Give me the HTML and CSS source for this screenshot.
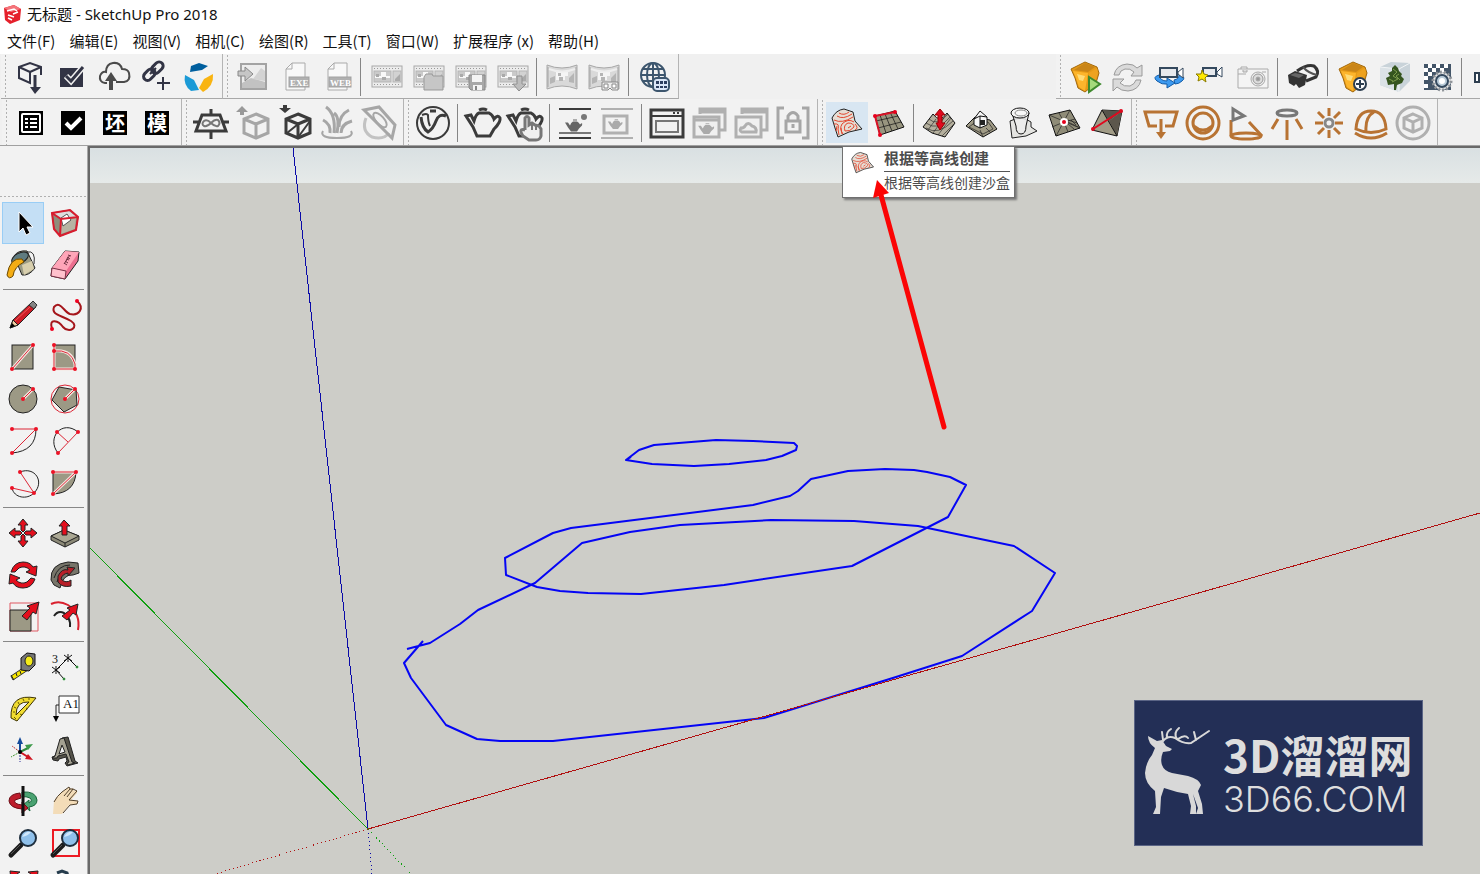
FILE: index.html
```html
<!DOCTYPE html>
<html lang="zh-CN">
<head>
<meta charset="utf-8">
<title>无标题 - SketchUp Pro 2018</title>
<link rel="stylesheet" href="styles.css">
</head>
<body>
<svg class="sprite" aria-hidden="true">
  <symbol id="film" viewBox="0 0 42 42">
    <rect x="7" y="10" width="30" height="21" fill="#ececec" stroke="#a8a8a8"/>
    <path d="M9 12.500H36M9 28.500H36" stroke="#999" stroke-dasharray="1 2"/>
    <rect x="9" y="15" width="17" height="11" fill="#cacaca" stroke="#b5b5b5"/>
    <rect x="28" y="15" width="8" height="11" fill="#d2d2d2" stroke="#b5b5b5"/>
    <path d="M10 20h6v-4h5v4h4v2h-15z" fill="#f8f8f8"/><path d="M11 18h3v3h-3zM17 21h4v3h-4zM30 23l5-5v7h-5z" fill="#aaa"/>
  </symbol>
  <symbol id="pano" viewBox="0 0 42 42">
    <path d="M6 9Q21 15 36 9V33Q21 27 6 33Z" fill="#d9d9d9" stroke="#a8a8a8"/>
    <path d="M7 11v20M35 11v20" stroke="#a5a5a5" stroke-width="1"/>
    <path d="M15 15h12v5h-3v4h-9z" fill="#f5f5f5"/><path d="M9 22l5-2v6l-5 2zM17 17h3v3h-3zM18 21h4v4h-4zM28 22l5-5v10l-5-1z" fill="#b5b5b5"/>
    <path d="M8 13Q21 18 34 13" fill="none" stroke="#eee" stroke-width="2"/>
  </symbol>
  <symbol id="teapot" viewBox="0 0 42 42">
    <path d="M4 14L9 13 12 19Q14 12 17 11H27Q31 13 32 17 36 12 38 16 39 20 32 27L28 34H15L11 25Z"/>
    <path d="M17 8Q21 6 25 8"/>
  </symbol>
  <symbol id="minipot" viewBox="0 0 20 14">
    <path d="M1 4L4 4 6 7Q7 4 9 3H13Q15 4 16 6 19 3 18 7L15 10 13 13H7L4 9ZM9 1h4v1H9z"/>
  </symbol>
  <symbol id="gem" viewBox="0 0 42 42">
    <path d="M21 6L33 11 35 17 32 27 21 36 14 32 11 22 7 13Z" fill="#e59a17" stroke="#a3690e" stroke-width="1"/>
    <path d="M21 7L31 11 24 16 10 14Z" fill="#c98518"/><path d="M9 15L24 17 21 35 15 31 12 22Z" fill="#fdb52c"/><path d="M13 18l8 2-2 5-4-1z" fill="#ffdc77"/><path d="M25 17l8-5 1 5-3 9-7 5z" fill="#eea21f"/>
  </symbol>
  <symbol id="lens" viewBox="0 0 42 42">
    <path d="M19 23L9 33" stroke="#1c1c1c" stroke-width="5" stroke-linecap="round"/><path d="M18 23L9 32" stroke="#555" stroke-width="1"/>
    <circle cx="26" cy="16" r="8" fill="#8fc0ea" stroke="#1e2e3d" stroke-width="2"/><path d="M20 15Q23 9 29 10 26 14 20 15" fill="#cfe7fb"/>
  </symbol>
</svg>

<header class="titlebar">
  <svg class="app-icon" width="19" height="20" viewBox="0 0 19 20"><path d="M1 4L11 1 18 5 17 16 7 20 2 16Z" fill="#e5202b"/><path d="M1 4L11 1 18 5 8 8Z" fill="#f4747a"/><path d="M4 7L11 5 14 7M5 11l6 2M10 10l5-2M5 14l4 2" stroke="#fff" stroke-width="1.500" fill="none"/></svg>
  <h1>无标题 - SketchUp Pro 2018</h1>
</header>
<nav class="menubar">
  <button>文件(F)</button><button>编辑(E)</button><button>视图(V)</button><button>相机(C)</button><button>绘图(R)</button><button>工具(T)</button><button>窗口(W)</button><button>扩展程序 (x)</button><button>帮助(H)</button>
</nav>

<div class="toolrow upper">
  <div class="group">
    <button class="tool" aria-label="下载模型"><svg viewBox="0 0 42 42" class="navy"><path d="M32 19V11L21 7 10 11V22L21 27V16L10 11M21 16L32 11"/><path d="M26 19V33" stroke-width="3"/><path d="M21 31H32L26 38Z" class="solid"/></svg></button>
    <button class="tool" aria-label="确认"><svg viewBox="0 0 42 42"><path d="M9 12H32V31H9Z" fill="#323445"/><path d="M15 20L20 25 32 11" fill="none" stroke="#f0f0f0" stroke-width="6"/><path d="M15 20L20 25 32 11" fill="none" stroke="#323445" stroke-width="3"/></svg></button>
    <button class="tool" aria-label="上传"><svg viewBox="0 0 42 42" class="navy"><path d="M14 27H12Q6 26 7 20 9 15 13 16 13 8 20 7 27 6 29 13 35 13 36 17 38 25 31 26H23" stroke="#4b4b4b"/><path d="M18 34V23" stroke="#4b4b4b" stroke-width="4"/><path d="M12 25L18 16 24 25Z" fill="#4b4b4b" stroke="none"/></svg></button>
    <button class="tool" aria-label="链接"><svg viewBox="0 0 42 42" class="navy"><g stroke-width="3"><rect x="16" y="8" width="13" height="8" rx="4" transform="rotate(-45 22 12)"/><rect x="8" y="15" width="13" height="8" rx="4" transform="rotate(-45 14 19)"/></g><path d="M15 18L21 12M22 27H35M28 21V34" stroke-width="2"/></svg></button>
    <button class="tool" aria-label="同步"><svg viewBox="0 0 42 42"><path d="M14 10L22 7 31 10 25 14 13 16Z" fill="#005f9e"/><path d="M8 19L17 24 22 34 14 35Q6 29 8 19Z" fill="#1b9ad6"/><path d="M36 18Q37 30 26 36L22 32 27 23Z" fill="#f9b411"/></svg></button>
  </div>
  <div class="group">
    <button class="tool" aria-label="导入"><svg viewBox="0 0 42 42"><rect x="10" y="8" width="25" height="25" fill="#ededed" stroke="#a3a3a3" stroke-width="2"/><path d="M11 27L20 22 34 26V32H11Z" fill="#c2c2c2"/><path d="M22 23L30 12 34 15V25Z" fill="#d3d3d3"/><path d="M7 15H14V11L22 18 14 25V20H7Z" fill="#c6c6c6" stroke="#888"/></svg></button>
    <button class="tool" aria-label="导出 EXE"><svg viewBox="0 0 42 42"><path d="M13 13L19 7H32V34H13Z" fill="#f8f8f8" stroke="#aaa"/><path d="M13 13H19V7" fill="none" stroke="#aaa"/><rect x="16" y="21" width="20" height="10" fill="#b0b0b0" stroke="#a1a1a1"/><text x="17" y="30" class="badge-text">EXE</text></svg></button>
    <button class="tool" aria-label="导出 WEB"><svg viewBox="0 0 42 42"><path d="M13 13L19 7H32V34H13Z" fill="#f8f8f8" stroke="#aaa"/><path d="M13 13H19V7" fill="none" stroke="#aaa"/><rect x="14" y="21" width="22" height="10" fill="#b0b0b0" stroke="#a1a1a1"/><text x="15" y="30" class="badge-text">WEB</text></svg></button>
    <span class="sep"></span>
    <button class="tool" aria-label="视频"><svg><use href="#film"/></svg></button>
    <button class="tool" aria-label="打开视频"><svg viewBox="0 0 42 42"><use href="#film"/><path d="M17 21L19 18H25L26 20H36V34H17Z" fill="#c6c6c6" stroke="#999"/></svg></button>
    <button class="tool" aria-label="保存视频"><svg viewBox="0 0 42 42"><use href="#film"/><path d="M20 19H36V34H22L20 32Z" fill="#a8a8a8" stroke="#888"/><path d="M23 19h10v7H23zM24 29h9v5h-9z" fill="#f4f4f4"/><path d="M26 30h2v4h-2z" fill="#888"/></svg></button>
    <button class="tool" aria-label="导出视频"><svg viewBox="0 0 42 42"><use href="#film"/><path d="M26 20H31V28H35L28 35 22 28H26Z" fill="#bdbdbd" stroke="#8e8e8e"/></svg></button>
    <span class="sep"></span>
    <button class="tool" aria-label="全景"><svg><use href="#pano"/></svg></button>
    <button class="tool" aria-label="VR 全景"><svg viewBox="0 0 42 42"><use href="#pano"/><path d="M19 26H35V34H29L27 32 25 34H19Z" fill="#eee" stroke="#888"/><path d="M21 28h4v4h-4zM29 28h4v4h-4z" fill="#fff" stroke="#888"/></svg></button>
    <span class="sep"></span>
    <button class="tool" aria-label="在线全景"><svg viewBox="0 0 42 42" fill="none" stroke="#3d566e" stroke-width="2"><circle cx="20" cy="19" r="12"/><ellipse cx="20" cy="19" rx="6" ry="12"/><path d="M20 7V31M8 19H32M10 13H30M10 25H30"/><rect x="20" y="22" width="16" height="13" rx="4" fill="#dbe7f8"/><path d="M23 25h3v3h-3zM27 25h3v3h-3zM31 25h3v3h-3zM23 30h3v2h-3zM27 30h3v2h-3zM31 30h3v2h-3z" fill="#2c3e60" stroke="none"/></svg></button>
  </div>
  <div class="group last">
    <button class="tool" aria-label="启动"><svg viewBox="0 0 42 42"><use href="#gem"/><path d="M25 21L36 28 25 36Z" fill="#a5da7c" stroke="#3f8a2e" stroke-width="2"/></svg></button>
    <button class="tool" aria-label="刷新"><svg viewBox="0 0 42 42" fill="#dadada" stroke="#9a9a9a"><path d="M8 19Q10 9 21 8 28 8 31 12L36 9V20H25L28 16Q24 12 19 13 14 14 13 19Z"/><path d="M35 24Q33 34 22 35 15 35 11 31L7 35V23H18L14 27Q18 31 24 30 29 28 30 24Z"/></svg></button>
    <button class="tool" aria-label="同步视图"><svg viewBox="0 0 42 42"><path d="M11 19Q4 21 9 25 14 29 19 28V32L27 27 19 22V25Q12 25 11 19M31 19Q39 21 34 25 31 28 27 28L26 24Q31 23 31 19Z" fill="#3d9af0" stroke="#125ca8"/><rect x="12" y="12" width="17" height="9" fill="#e6e9ed" stroke="#34495e" stroke-width="2"/><path d="M30 16L35 12V22L30 18Z" fill="#fff" stroke="#34495e"/></svg></button>
    <button class="tool" aria-label="收藏视图"><svg viewBox="0 0 42 42"><rect x="13" y="12" width="13" height="8" fill="#e6e9ed" stroke="#34495e" stroke-width="2"/><path d="M27 16L32 11V21L27 18Z" fill="#fff" stroke="#34495e"/><path d="M12 14L14 18 18 19 15 22 16 26 12 23 8 25 9 21 6 18 11 18Z" fill="#ffe900" stroke="#8a7b00"/></svg></button>
    <button class="tool" aria-label="截图"><svg viewBox="0 0 42 42" stroke="#aaa"><path d="M9 13V11H15V13M6 13H36V32H6Z" fill="#f4f4f4"/><path d="M6 18h8M30 16h4" /><path d="M11 14v2h4v-2" fill="#ddd"/><circle cx="26" cy="23" r="7" fill="#eee"/><circle cx="26" cy="23" r="5" fill="#ddd" stroke="#999"/><circle cx="26" cy="23" r="2" fill="#999"/></svg></button>
    <span class="sep"></span>
    <button class="tool" aria-label="VR"><svg viewBox="0 0 42 42"><path d="M15 15Q25 8 32 10 38 15 34 21L24 25" fill="none" stroke="#333" stroke-width="3"/><path d="M21 11Q26 17 35 19" fill="none" stroke="#555" stroke-width="2"/><path d="M6 19L13 15 25 19 23 29 17 32 14 28 12 30 7 27Z" fill="#333"/><path d="M8 19L13 17 22 19 17 22Z" fill="#666"/></svg></button>
    <span class="sep"></span>
    <button class="tool" aria-label="添加素材"><svg viewBox="0 0 42 42"><use href="#gem"/><circle cx="28" cy="28" r="6" fill="#fff" stroke="#2d3e50" stroke-width="2"/><path d="M24 28H32M28 24V32" stroke="#2d3e50" stroke-width="2"/></svg></button>
    <button class="tool" aria-label="植物"><svg viewBox="0 0 42 42"><path d="M6 11L17 6 36 7V25L25 36 6 29Z" fill="#c9d3d9"/><path d="M6 11L25 13V36L6 29Z" fill="#dbe2e6"/><path d="M6 11L25 13 36 7M25 13V36" stroke="#f2f5f6" fill="none"/><path d="M21 9L24 12 25 15 28 18 27 20 30 23 28 27 23 29 22 34H20V28L14 29 13 25 12 22 16 20 14 17 18 15 18 12Z" fill="#35551f"/><path d="M19 13l4 3-4 4 5 3-6 3M25 18l-3 2 4 4M15 23l4 2" stroke="#7d9c4c" fill="none"/></svg></button>
    <button class="tool" aria-label="材质设置"><svg viewBox="0 0 42 42"><rect x="8" y="8" width="27" height="26" fill="#435568"/><path d="M12 8h4v4h-4zM20 8h4v4h-4zM28 8h4v4h-4zM8 12h4v4H8zM16 12h4v4h-4zM24 12h4v4h-4zM12 16h4v4h-4zM8 20h4v4H8zM8 28h4v4H8z" fill="#fff"/><circle cx="26" cy="25" r="9" fill="#e6e6e6" stroke="#8f9499" stroke-width="3" stroke-dasharray="2 2"/><circle cx="26" cy="25" r="6" fill="#b9cbd8" stroke="#34495e" stroke-width="2"/><circle cx="26" cy="25" r="3" fill="#fff"/></svg></button>
    <span class="sep"></span>
    <button class="tool clipped" aria-label="更多"><svg viewBox="0 0 42 42"><path d="M9 17H20V26H9ZM13 17V26" fill="#fff" stroke="#2d3e50" stroke-width="2"/></svg></button>
  </div>
</div>

<div class="toolrow lower">
  <div class="group">
    <button class="tool" aria-label="列表"><svg viewBox="0 0 42 42"><path d="M9 9H33V33H9Z"/><rect x="12" y="12" width="18" height="18" rx="1" fill="none" stroke="#fff" stroke-width="2"/><path d="M15 17h3M15 21h3M15 25h3M20 17h7M20 21h7M20 25h7" stroke="#fff" stroke-width="2"/></svg></button>
    <button class="tool" aria-label="勾选"><svg viewBox="0 0 42 42"><path d="M9 9H33V33H9Z"/><path d="M14 21L19 26 29 16" fill="none" stroke="#fff" stroke-width="4"/></svg></button>
    <button class="tool"><span class="stamp">坯</span></button>
    <button class="tool"><span class="stamp">模</span></button>
  </div>
  <div class="group">
    <button class="tool" aria-label="无限平面"><svg viewBox="0 0 42 42" class="dark"><path d="M12 13H30L36 29H6ZM21 7V13M21 30V37M3 20H9M33 20H39"/><path d="M21 21Q17 17 14 19 11 22 14 24 17 25 21 21 25 17 28 18 31 21 28 24 25 25 21 21" stroke="#777" stroke-width="2"/></svg></button>
    <button class="tool" aria-label="导出代理"><svg viewBox="0 0 42 42" class="pale"><path d="M24 12L36 17V31L24 36 12 31V17ZM12 17L24 22 36 17M24 22V36"/><path d="M10 4L16 10H12V13H8V10H4Z" fill="#999" stroke="none"/></svg></button>
    <button class="tool" aria-label="导入代理"><svg viewBox="0 0 42 42" class="dark"><path d="M24 12L36 17V31L24 36 12 31V17ZM12 17L24 22 36 17M24 22V36"/><path d="M13 31L23 23M25 34L36 19" stroke-width="2"/><path d="M11 11L5 6H9V3H13V6H17Z" class="solid"/></svg></button>
    <button class="tool" aria-label="毛发"><svg viewBox="0 0 42 42" class="pale"><path d="M7 29Q3 36 21 36 39 36 35 29" stroke-width="2"/><path d="M14 31Q15 22 7 18M18 31Q20 12 10 5M21 31Q24 15 18 11M25 31Q25 22 36 19M23 25Q23 13 33 8"/></svg></button>
    <button class="tool" aria-label="剖切"><svg viewBox="0 0 42 42" class="pale"><path d="M8 16Q3 29 14 35 26 38 31 31" stroke="#c2c2c2"/><path d="M6 8L21 5 37 23 34 36Z"/><ellipse cx="22" cy="18" rx="4" ry="9" transform="rotate(-42 22 18)" stroke-width="2"/></svg></button>
  </div>
  <div class="group">
    <button class="tool" aria-label="V-Ray"><svg viewBox="0 0 42 42" class="dark"><circle cx="21" cy="21" r="16" stroke-width="2"/><path d="M9 15Q10 26 16 30 21 27 24 19 27 11 34 14"/><path d="M10 13Q15 11 16 13 16 20 18 24" stroke-width="2"/><path d="M18 9H24" /></svg></button>
    <span class="sep"></span>
    <button class="tool" aria-label="渲染"><svg viewBox="0 0 42 42" class="dark"><use href="#teapot"/></svg></button>
    <button class="tool" aria-label="交互渲染"><svg viewBox="0 0 42 42" class="dark"><use href="#teapot"/><path d="M21 28V16Q23 13 25 16V23L28 21 31 23 35 24 37 27V34Q36 38 32 38H25L19 34Q14 26 21 28" fill="#f0f0f0" stroke="#777" stroke-width="3"/><path d="M28 23v5M32 24v4" stroke="#777" stroke-width="2"/></svg></button>
    <span class="sep"></span>
    <button class="tool" aria-label="视口渲染"><svg viewBox="0 0 42 42"><path d="M5 7H37M5 36H37" stroke="#3b3b3b" stroke-width="2"/><path d="M5 31H37" stroke="#777" stroke-width="2"/><use href="#minipot" x="10" y="16" width="20" height="15" fill="#666"/><circle cx="30" cy="15" r="3" fill="#777"/></svg></button>
    <button class="tool" aria-label="视口渲染 2"><svg viewBox="0 0 42 42"><path d="M5 7H37M5 36H37" stroke="#b0b0b0" stroke-width="2"/><rect x="8" y="14" width="23" height="17" fill="none" stroke="#b0b0b0" stroke-width="3"/><use href="#minipot" x="11" y="16" width="17" height="12" fill="#aaa"/></svg></button>
    <span class="sep"></span>
    <button class="tool" aria-label="帧缓存"><svg viewBox="0 0 42 42" class="dark"><rect x="5" y="8" width="32" height="27"/><path d="M5 14H37" stroke-width="2"/><path d="M27 11h2M31 11h2" stroke-width="2"/><rect x="10" y="19" width="22" height="11" stroke="#777" stroke-width="2"/></svg></button>
    <button class="tool" aria-label="批量渲染"><svg viewBox="0 0 42 42" class="pale slim"><path d="M12 12V7H37V28H32M12 10H37"/><rect x="6" y="15" width="25" height="20" fill="#f0f0f0"/><path d="M6 18H31"/><use href="#minipot" x="9" y="20" width="19" height="13" class="palefill"/></svg></button>
    <button class="tool" aria-label="云渲染"><svg viewBox="0 0 42 42" class="pale slim"><path d="M12 12V7H37V28H32M12 10H37"/><rect x="6" y="15" width="25" height="20" fill="#f0f0f0"/><path d="M12 30Q9 29 11 26 14 26 15 24 18 19 22 24 27 25 26 30Z"/></svg></button>
    <button class="tool" aria-label="锁定"><svg viewBox="0 0 42 42" class="pale"><path d="M12 6H6V36H12M30 6H36V36H30M16 18V14Q21 7 26 14V18"/><rect x="14" y="19" width="14" height="11"/><path d="M21 22v4"/></svg></button>
  </div>
  <div class="group">
    <button class="tool hover" aria-label="根据等高线创建"><svg viewBox="0 0 42 42"><g id="contour"><path d="M6 16Q10 8 18 7L27 10 29 19 36 27 23 30 12 35 9 26Z" fill="#e6ddd4" stroke="#222"/><path d="M11 14Q17 18 26 12M13 11Q18 14 23 10M8 18Q16 22 27 15M8 22Q14 21 12 27L13 33M11 24l-1 5M17 32Q13 27 16 22 22 16 28 20M19 29Q17 23 22 21 28 21 28 25 24 30 19 29M22 26l3-2M29 22Q33 26 29 28M15 26l1 6" fill="none" stroke="#e3452d"/></g></svg></button>
    <button class="tool" aria-label="根据网格创建"><svg viewBox="0 0 42 42"><path d="M7 14L27 9 36 25 12 33Z" fill="#98957f" stroke="#111"/><path d="M12 13L18 31M17 12L24 29M22 10L30 27M8 19L30 14M10 26L33 20" stroke="#111" stroke-opacity=".7"/><path d="M27 10L7 14 12 33" fill="none" stroke="#d81226" stroke-width="2"/><g fill="#e8001c"><circle cx="7" cy="14" r="2"/><circle cx="27" cy="10" r="2"/><circle cx="12" cy="33" r="2"/></g></svg></button>
    <span class="sep"></span>
    <button class="tool" aria-label="曲面起伏"><svg viewBox="0 0 42 42"><path d="M5 25L15 12Q22 22 29 11L37 21 27 35 14 31Z" fill="#b4af9d" stroke="#111"/><path d="M8 21Q20 30 32 15M11 17Q19 25 30 12M10 28L18 17M15 31L26 16M20 33L33 16M24 34L36 22M8 26Q20 34 35 19" fill="none" stroke="#222" stroke-opacity=".6"/><path d="M22 7L27 13H24V21H27L22 28 18 21H20V13H17Z" fill="#e0091e" stroke="#900"/></svg></button>
    <button class="tool" aria-label="曲面平整"><svg viewBox="0 0 42 42"><path d="M6 24L15 15 30 18 37 27 23 35Z" fill="#a09b86" stroke="#111"/><path d="M9 25L17 19 28 20 33 27 23 32ZM23 35L20 28M31 31l-5-5" fill="none" stroke="#222" stroke-opacity=".7"/><path d="M14 17L20 9 27 15V23L20 26 14 23Z" fill="#f8f8f8" stroke="#111"/><path d="M14 17L20 14 27 15M20 14V26" stroke="#111" fill="none"/><path d="M20 18h5v5h-5z" fill="#222"/></svg></button>
    <button class="tool" aria-label="曲面投射"><svg viewBox="0 0 42 42"><path d="M8 19Q20 13 29 20L29 25 35 29 24 34 10 36Z" fill="#e4e4e1" stroke="#222"/><path d="M10 11L14 24Q14 32 19 32 24 32 24 24L27 11" fill="#eee" fill-opacity=".8" stroke="#111"/><ellipse cx="18" cy="11" rx="9" ry="5" fill="#f7f7f7" stroke="#111"/><ellipse cx="19" cy="11" rx="6" ry="3" fill="none" stroke="#888"/></svg></button>
    <button class="tool" aria-label="添加细部"><svg viewBox="0 0 42 42"><path d="M5 13L26 8 36 26 12 34Z" fill="#8f8c78" stroke="#111"/><path d="M5 13L36 26M26 8L12 34M20 20L15 11M20 20L8 25M20 20L24 30M20 20L31 17M24 20l10 5M24 22l6 5M27 18l5 5M24 18l9 3" stroke="#222" stroke-opacity=".7"/><circle cx="20" cy="20" r="4" fill="#fff"/><circle cx="20" cy="20" r="2" fill="#e4001b"/></svg></button>
    <button class="tool" aria-label="对调角线"><svg viewBox="0 0 42 42"><path d="M16 8L36 9 31 34 6 28Z" fill="#a19c87" stroke="#111"/><path d="M16 8L36 9 23 19Z" fill="#57534a"/><path d="M36 9L31 34 23 19Z" fill="#5c574c"/><path d="M16 8L31 34" stroke="#111"/><path d="M7 27L35 9" stroke="#e0091e" stroke-width="2"/><circle cx="7" cy="27" r="2" fill="#e0091e"/><circle cx="35" cy="9" r="2" fill="#e0091e"/></svg></button>
  </div>
  <div class="group">
    <button class="tool" aria-label="面光源"><svg viewBox="0 0 42 42" class="amber"><path d="M17 24H9L5 10H37L33 24H25M21 17V32"/><path d="M16 30H26L21 37Z" fill="#b87333" stroke="none"/></svg></button>
    <button class="tool" aria-label="球光源"><svg viewBox="0 0 42 42" class="amber"><circle cx="21" cy="21" r="16"/><circle cx="21" cy="21" r="10"/><path d="M12 24Q21 32 30 24"/></svg></button>
    <button class="tool" aria-label="聚光灯"><svg viewBox="0 0 42 42" class="amber"><path d="M7 18V34M25 20L38 34"/><ellipse cx="22" cy="34" rx="15" ry="3"/><path d="M9 7L20 14 9 18Z" stroke="#777"/></svg></button>
    <button class="tool" aria-label="IES 光源"><svg viewBox="0 0 42 42" class="amber"><path d="M21 18V38M12 17L6 27M30 17L36 27"/><ellipse cx="21" cy="11" rx="10" ry="3" stroke="#777"/></svg></button>
    <button class="tool" aria-label="泛光灯"><svg viewBox="0 0 42 42" class="amber"><path d="M21 6V14M21 28V36M7 21H15M27 21H35M10 10L16 16M26 26L32 32M32 10L26 16M16 26L10 32"/><circle cx="21" cy="21" r="4" stroke="#888"/></svg></button>
    <button class="tool" aria-label="穹顶光源"><svg viewBox="0 0 42 42" class="amber"><path d="M6 27Q7 9 21 9 35 9 36 27 21 34 6 27ZM16 29Q15 15 24 10M5 31Q21 41 37 31"/></svg></button>
    <button class="tool" aria-label="网格光源"><svg viewBox="0 0 42 42" class="pale slim"><circle cx="21" cy="21" r="16"/><path d="M21 12L30 16V26L21 30 12 26V16ZM12 16L21 20 30 16M21 20V30" stroke-width="3"/></svg></button>
  </div>
</div>

<main class="workspace">
  <aside class="palette">
    <div class="pair">
      <button class="tool picked" aria-label="选择"><svg viewBox="0 0 42 42"><path d="M17 10V30L21 26 24 33 28 31 25 25H31Z" stroke="#fff"/></svg></button>
      <button class="tool" aria-label="制作组件"><svg viewBox="0 0 42 42"><path d="M8 11L26 8 34 15 32 28 16 34 10 27Z" fill="#8f8d7c" stroke="#333"/><path d="M9 11L25 9 33 15 16 17Z" fill="#ddd"/><path d="M17 18L32 16 31 27 17 32Z" fill="#b7b4a3"/><path d="M17 16l6-4 4 6-8 6z" fill="#fff" stroke="#555"/><path d="M8 11L26 8 34 15 32 28 16 34 10 27ZM8 11L17 17 34 15M17 17L16 34" fill="none" stroke="#d81c2e" stroke-width="2"/></svg></button>
      <button class="tool" aria-label="材质"><svg viewBox="0 0 42 42"><path d="M12 12Q16 6 25 7L33 24Q27 32 20 31Z" fill="#9a9a84" stroke="#222"/><ellipse cx="18" cy="14" rx="9" ry="5" transform="rotate(-28 18 14)" fill="#5f7b80" stroke="#222"/><path d="M20 21l10-4 2 8-10 6z" fill="#d8cfae"/><path d="M20 15Q8 13 5 31 7 36 11 32 12 23 22 18Z" fill="#f5ad13" stroke="#6b4800"/><path d="M25 8Q34 6 32 20" fill="none" stroke="#333"/></svg></button>
      <button class="tool" aria-label="橡皮擦"><svg viewBox="0 0 42 42"><path d="M8 24L21 7 35 8 34 17 21 35 7 32Z" fill="#ec6f90" stroke="#222"/><path d="M8 24L21 7 35 8 22 27Z" fill="#ffa5b8"/><path d="M8 24L22 27 21 35 7 32Z" fill="#ffc1cd" stroke="#7b3146"/><path d="M20 19l3 2M21 17l3 2M22 15l3 1M23 13l3 2M24 11l3 1M20 20l6-9" stroke="#6d3040"/></svg></button>
    </div>
    <hr>
    <div class="pair">
      <button class="tool" aria-label="直线"><svg viewBox="0 0 42 42"><path d="M8 34L11 26 29 9 34 13 16 31Z" fill="#cf1c26" stroke="#222"/><path d="M8 34L11 26 16 31Z" fill="#f1d2a5" stroke="#222"/><path d="M8 34l2-5 3 3z"/><path d="M27 11L31 7 35 11 32 15Z" fill="#858585" stroke="#333"/><path d="M13 27L28 13" stroke="#f05a5a"/></svg></button>
      <button class="tool" aria-label="手绘线"><svg viewBox="0 0 42 42"><path d="M8 35C4 23 15 27 19 33 25 40 36 33 27 27 17 21 7 21 10 13 16 6 20 18 26 20 35 22 41 14 33 7" fill="none" stroke="#a5161c" stroke-width="2"/><circle cx="8" cy="35" r="2" fill="#f00020"/><circle cx="33" cy="7" r="2" fill="#f00020"/></svg></button>
      <button class="tool" aria-label="矩形"><svg viewBox="0 0 42 42" class="draw"><rect x="10" y="9" width="21" height="24" class="face"/><path d="M10 33L31 9" class="halo"/><path d="M10 33L31 9" class="red"/><circle cx="10" cy="33" r="2"/><circle cx="31" cy="9" r="2"/></svg></button>
      <button class="tool" aria-label="旋转矩形"><svg viewBox="0 0 42 42" class="draw"><rect x="10" y="9" width="21" height="24" class="face"/><path d="M10 9V33H31V28Q27 13 10 15" class="halo"/><path d="M10 9V33H31V28Q27 13 10 15" class="red"/><circle cx="10" cy="9" r="2"/><circle cx="10" cy="15" r="2"/><circle cx="10" cy="33" r="2"/><circle cx="31" cy="33" r="2"/></svg></button>
      <button class="tool" aria-label="圆"><svg viewBox="0 0 42 42" class="draw"><circle cx="21" cy="21" r="14" class="face"/><path d="M21 21L31 11" class="halo"/><path d="M21 21L31 11" class="red"/><circle cx="21" cy="21" r="2"/><circle cx="31" cy="11" r="2"/></svg></button>
      <button class="tool" aria-label="多边形"><svg viewBox="0 0 42 42" class="draw"><circle cx="21" cy="21" r="14" class="red"/><path d="M15 9L32 12 33 27 20 34 8 22Z" class="face"/><path d="M21 21L31 11" class="halo"/><path d="M21 21L31 11" class="red"/><circle cx="21" cy="21" r="2"/><circle cx="31" cy="11" r="2"/></svg></button>
      <button class="tool" aria-label="圆弧"><svg viewBox="0 0 42 42" class="draw"><path d="M34 9Q34 31 10 33" class="ink"/><path d="M10 9H34L10 33" class="red"/><circle cx="10" cy="9" r="2"/><circle cx="34" cy="9" r="2"/><circle cx="10" cy="33" r="2"/></svg></button>
      <button class="tool" aria-label="两点圆弧"><svg viewBox="0 0 42 42" class="draw"><path d="M14 33C2 18 18 -1 34 12" class="ink"/><path d="M14 33L34 12M13 12L24 22" class="red"/><circle cx="13" cy="12" r="2"/><circle cx="34" cy="12" r="2"/><circle cx="14" cy="33" r="2"/></svg></button>
      <button class="tool" aria-label="三点圆弧"><svg viewBox="0 0 42 42" class="draw"><path d="M18 10C33 4 43 20 32 31 25 38 12 36 10 26" class="ink"/><path d="M18 10L32 31 10 26" class="red"/><circle cx="18" cy="10" r="2"/><circle cx="32" cy="31" r="2"/><circle cx="10" cy="26" r="2"/></svg></button>
      <button class="tool" aria-label="扇形"><svg viewBox="0 0 42 42" class="draw"><path d="M9 10H32Q31 31 9 32Z" class="face"/><path d="M9 10H32L9 32" class="halo"/><path d="M9 10H32L9 32" class="red"/><circle cx="9" cy="10" r="2"/><circle cx="32" cy="10" r="2"/><circle cx="9" cy="32" r="2"/></svg></button>
    </div>
    <hr>
    <div class="pair">
      <button class="tool" aria-label="移动"><svg viewBox="0 0 42 42" class="bold"><path d="M21 7L26 13H23V18L21 20 19 18V13H16ZM35 21L29 26V23H24L22 21 24 19H29V16ZM21 35L16 29H19V24L21 22 23 24V29H26ZM7 21L13 16V19H18L20 21 18 23H13V26Z"/></svg></button>
      <button class="tool" aria-label="推拉"><svg viewBox="0 0 42 42" class="bold"><path d="M7 24L20 18 35 24V28L21 35 7 28Z" fill="#8b8977"/><path d="M7 24L20 18 35 24 21 31Z" fill="#aaa793"/><path d="M21 31V35"/><path d="M18 23V14H15L20 8 26 14H23V23Z"/></svg></button>
      <button class="tool" aria-label="旋转"><svg viewBox="0 0 42 42" class="bold"><path d="M9 18Q12 8 21 8 28 8 31 13L35 12 34 22 24 18 28 16Q23 11 17 14L13 18Z"/><path d="M33 25Q30 34 21 34 14 34 11 29L7 30 8 20 18 24 14 26Q19 31 25 28L29 24Z"/></svg></button>
      <button class="tool" aria-label="路径跟随"><svg viewBox="0 0 42 42" class="bold"><path d="M7 26Q6 10 24 8L34 9 35 19 29 21Q19 20 16 34L10 31Z" fill="#77756a"/><path d="M10 24Q14 11 26 11M13 28Q15 17 30 15" fill="none"/><path d="M14 22Q18 14 24 16L23 13 31 14 24 22V19Q18 20 17 25 22 30 27 26V32Q18 34 14 28Z" fill="#b81f28"/></svg></button>
      <button class="tool" aria-label="缩放"><svg viewBox="0 0 42 42" class="bold"><path d="M8 7H36V35H8Z" fill="none" stroke="#df5962"/><path d="M8 14H29V35H8Z" fill="#9c9985"/><path d="M25 24L31 16 34 18 37 6 25 10 28 12 20 20Z"/></svg></button>
      <button class="tool" aria-label="偏移"><svg viewBox="0 0 42 42" class="bold"><path d="M7 8Q15 4 24 9 37 18 34 34" fill="none" stroke="#d9202e" stroke-width="2"/><path d="M10 20Q14 14 20 17 27 22 26 31" fill="none" stroke-width="2"/><path d="M23 24L29 17 32 19 34 8 23 12 26 14 18 20Z"/></svg></button>
    </div>
    <hr>
    <div class="pair">
      <button class="tool" aria-label="卷尺"><svg viewBox="0 0 42 42"><path d="M9 30L24 20 26 24 11 34Z" fill="#f7e600" stroke="#333"/><path d="M9 29l3 5M14 27l1 3M18 25l1 3" stroke="#222"/><path d="M19 12L25 7 33 8 33 19 27 25 19 24Z" fill="#777" stroke="#111"/><ellipse cx="27" cy="15" rx="4" ry="5" fill="#f4ea19" stroke="#222"/></svg></button>
      <button class="tool" aria-label="尺寸"><svg viewBox="0 0 42 42" stroke="#111"><path d="M12 24L24 12M24 12L33 21M12 24L20 33M20 9l8 6M28 9l-8 6M8 21l8 6M16 21l-8 6M24 8v8M12 20v8" fill="none"/><text x="8" y="17" class="dim">3</text><circle cx="33" cy="21" r="1" stroke="#38a545"/><circle cx="20" cy="33" r="1" stroke="#38a545"/></svg></button>
      <button class="tool" aria-label="量角器"><svg viewBox="0 0 42 42"><path d="M34 10Q8 5 9 30L15 33Z" fill="#f1dd31" stroke="#3c3200"/><path d="M27 14Q14 13 14 27Z" fill="#f0f0f0" stroke="#3c3200"/><path d="M12 29l2 2M11 24h2M12 19l2 1M16 14l1 2M21 11l1 2M27 10v2M18 26l2 1M24 20l2 1" stroke="#6b5c00"/></svg></button>
      <button class="tool" aria-label="文字"><svg viewBox="0 0 42 42"><path d="M15 8H35V25H15Z" fill="#fff" stroke="#333"/><path d="M15 17H12V29" fill="none" stroke="#222"/><path d="M9 28H15L12 34Z"/><text x="19" y="20" class="a1">A1</text></svg></button>
      <button class="tool" aria-label="轴"><svg viewBox="0 0 42 42"><g stroke-dasharray="2 1"><path d="M18 22L10 16" stroke="#b33"/><path d="M18 22L9 27" stroke="#493"/><path d="M18 22V32" stroke="#339"/></g><path d="M18 22V13" stroke="#154b9b" stroke-width="2"/><path d="M15 14L18 7 21 14Z" fill="#154b9b"/><path d="M18 22L26 18" stroke="#2f8a3c" stroke-width="2"/><path d="M23 15L31 14 26 20Z" fill="#3c9a4a"/><path d="M18 22L26 27" stroke="#cf1521" stroke-width="2"/><path d="M26 24L31 30 23 29Z" fill="#cf1521"/><circle cx="18" cy="22" r="2"/></svg></button>
      <button class="tool" aria-label="三维文字"><svg viewBox="0 0 42 42"><path d="M18 8L24 7 31 31 34 33 23 36 21 33 23 31 22 27 15 29 14 31 9 30 8 27 11 26Z" fill="#55534a" stroke="#222"/><path d="M16 9L20 8 28 32 31 33 24 35 23 33 25 32 22 24 14 26 13 28 8 28 11 26Z" fill="#a4a192" stroke="#222"/><path d="M18 15L21 22 15 24Z" fill="#f1f1f1" stroke="#222"/></svg></button>
    </div>
    <hr>
    <div class="pair">
      <button class="tool" aria-label="环绕观察"><svg viewBox="0 0 42 42"><path d="M20 12Q34 11 35 20 35 26 27 27L28 31 21 25 27 20V23Q31 21 28 18 24 16 20 17Z" fill="#4aa271" stroke="#17643a"/><path d="M18 13Q7 14 7 21 8 28 20 29V33L26 28 20 22V25Q11 24 13 20L19 18Z" fill="#bd1d2c" stroke="#6d0d16"/><path d="M21 6V36" stroke="#111" stroke-width="3"/></svg></button>
      <button class="tool" aria-label="平移"><svg viewBox="0 0 42 42"><path d="M9 34L10 21Q13 16 18 12L25 7 27 9 29 8 30 11 33 10 33 13 27 20 34 21 33 24 25 25 20 31 18 34Z" fill="#f3dcb8"/><path d="M10 22Q13 16 18 12L25 7 26 9 20 16M26 9L29 9 23 17M29 9L33 11 25 20 34 21 33 24 26 25 19 33" fill="none" stroke="#4f3f2b"/></svg></button>
      <button class="tool" aria-label="缩放视图"><svg><use href="#lens"/></svg></button>
      <button class="tool" aria-label="缩放窗口"><svg viewBox="0 0 42 42"><rect x="9" y="8" width="26" height="26" fill="none" stroke="#ed1b24" stroke-width="2"/><use href="#lens"/></svg></button>
      <button class="tool" aria-label="充满视窗"><svg viewBox="0 0 42 42" class="bold"><path d="M8 7L18 8 15 10 20 15 17 17 12 12 9 16ZM36 7L26 8 29 10 24 15 27 17 32 12 35 16Z"/></svg></button>
      <button class="tool" aria-label="上一视图"><svg viewBox="0 0 42 42"><path d="M13 9L18 7 23 9 24 12 28 12" fill="none" stroke="#263c4d" stroke-width="3"/><path d="M11 12l6-2 5 4z" fill="#84aeca"/></svg></button>
    </div>
  </aside>

  <section class="stage">
    <svg class="scene" role="img" aria-label="等高线模型">
      <defs><linearGradient id="sky" x2="0" y2="1"><stop stop-color="#d9e0e2"/><stop offset="1" stop-color="#e6eae9"/></linearGradient></defs>
      <rect width="100%" height="35" fill="url(#sky)"/>
      <g transform="translate(-90 -148)" fill="none">
        <g shape-rendering="crispEdges">
          <path d="M293 148L368 829" stroke="#0a0aa8"/><path d="M368 829L372 874" stroke="#0a0aa8" stroke-dasharray="1 3"/>
          <path d="M90 548L368 829" stroke="#10a010"/><path d="M368 829L411 874" stroke="#10a010" stroke-dasharray="1 3"/>
        </g>
        <g stroke="#0505f5" stroke-width="2" stroke-linejoin="round">
          <path d="M631 457L626 460 639 450 654 445 716 440 753 441 794 443 797 446 796 450 782 456 766 460 729 464 694 466 652 464 626 460"/>
          <path d="M505 558L553 533 571 528 753 505 790 496 798 491 811 479 848 471 885 469 914 470 927 472 950 477 966 485 948 517 852 566 724 585 641 594 588 593 560 591 537 587 506 575Z"/>
          <path d="M407 649L430 643 460 624 478 610 535 583 582 543 630 532 680 525 771 520 854 521 918 526 1014 546 1055 573 1032 611 962 656 896 677 764 718 553 741 500 741 477 739 446 725 411 678 404 663 423 641"/>
        </g>
        <g shape-rendering="crispEdges" stroke="#b01010"><path d="M368 829L1480 513"/><path d="M368 829L215 874" stroke-dasharray="1 3"/></g>
      </g>
    </svg>

    <div class="tooltip" role="tooltip">
      <svg width="24" height="24" viewBox="5 5 33 33"><use href="#contour"/></svg>
      <div class="tip-body"><strong>根据等高线创建</strong><p>根据等高线创建沙盒</p></div>
    </div>
    <svg class="pointer" width="84" height="260" viewBox="0 0 84 260"><path d="M11 16L74 248" stroke="#fb0505" stroke-width="5" stroke-linecap="round"/><path d="M7 1L3 19 19 14Z" fill="#fb0505"/></svg>

    <div class="watermark">
      <svg width="72" height="94" viewBox="0 0 72 94"><path d="M6 10L15 15 20 14 24 20 30 23 28 25 21 26Q18 33 20 39 22 45 30 47L46 50Q57 53 59 59L56 65 60 78 61 88H54L56 82 51 68 54 80 54 88H48L49 80 46 68Q33 66 22 62L19 71 18 88H11L14 81 13 65Q3 57 3 47 4 36 10 29L13 22Q6 17 6 10Z" fill="#d8d8d8"/><path d="M21 15Q26 9 33 12 41 18 49 17 58 11 67 5M21 14L20 6M25 11Q24 6 29 3M35 13Q31 7 37 2M36 13Q43 8 46 12M54 14L52 6" fill="none" stroke="#d8d8d8" stroke-width="2" stroke-linecap="round"/></svg>
      <div class="brand"><span class="brand-name">3D溜溜网</span><span class="brand-url">3D66.COM</span></div>
    </div>
  </section>
</main>
</body>
</html>
```
FILE: styles.css
```css
* { box-sizing: border-box; }

body {
  display: flex;
  flex-direction: column;
  height: 100vh;
  margin: 0;
  overflow: hidden;
  background: #f0f0f0;
  color: #111;
  font-family: "Noto Sans CJK SC", sans-serif;
  font-size: 15px;
}

.sprite { position: absolute; width: 0; height: 0; }

button {
  padding: 0;
  border: 0;
  background: none;
  color: inherit;
  font: inherit;
}

/* Title and menus */
.titlebar {
  display: flex;
  flex: none;
  align-items: center;
  gap: 5px;
  height: 28px;
  padding-left: 3px;
  background: #fff;
}
.titlebar h1 {
  margin: 0;
  padding-bottom: 2px;
  font-family: "Noto Sans", "Noto Sans CJK SC", sans-serif;
  font-size: 15px;
  font-weight: 400;
}
.menubar {
  display: flex;
  flex: none;
  gap: 14px;
  height: 26px;
  padding-left: 7px;
  background: #fff;
}
.menubar button { white-space: nowrap; line-height: 26px; }

/* Toolbars */
.toolrow { display: flex; flex: none; }
.upper { height: 45px; padding-left: 1px; }
.lower { height: 47px; padding-left: 2px; border-bottom: 1px solid #a0a0a0; }
.group {
  display: flex;
  padding: 2px 3px 0 8px;
  border-right: 1px solid #b4b4b4;
  border-bottom: 1px solid #a8a8a8;
  background: radial-gradient(circle, #b0b0b0 1px, transparent 1px) 3px 4px / 3px 4px repeat-y #f2f2f2;
}
.lower .group { padding-top: 3px; border-bottom: 0; }
.group.last { margin-left: auto; padding-right: 0; border-right: 0; }

.tool { flex: none; width: 42px; height: 42px; }
.tool svg { display: block; width: 42px; height: 42px; }
.tool.clipped { width: 14px; overflow: hidden; }
.tool.hover { height: 41px; background: #d8e6f2; }
.tool.picked { border: 1px solid #99cdf5; background: #c4dff5; }
.tool.picked svg { margin: -1px; }
.sep { flex: none; width: 8px; height: 38px; margin-top: 2px; background: linear-gradient(#858585, #858585) 3px 0 / 1px 100% no-repeat; }

.stamp {
  display: block;
  width: 24px;
  height: 24px;
  margin: 0 auto;
  background: #000;
  color: #fff;
  font-size: 20px;
  font-weight: 700;
  line-height: 23px;
}

/* Icon strokes */
.navy { fill: none; stroke: #323445; stroke-width: 2; }
.navy .solid { fill: #323445; stroke: none; }
.dark { fill: none; stroke: #3b3b3b; stroke-width: 3; }
.dark .solid { fill: #3b3b3b; stroke: none; }
.pale { fill: none; stroke: #a6a6a6; stroke-width: 3; }
.pale.slim { stroke: #b0b0b0; stroke-width: 3; }
.palefill { fill: #aaa; stroke: none; }
.amber { fill: none; stroke: #b87333; stroke-width: 3; }
.draw { fill: #ed1226; }
.draw .face { fill: #9c9985; stroke: #222; }
.draw .halo { fill: none; stroke: #f6e8e2; stroke-width: 3; }
.draw .red { fill: none; stroke: #dc2636; }
.draw .ink { fill: none; stroke: #222; stroke-width: 1; }
.bold { fill: #e30f1d; stroke: #222; stroke-width: 1; }
.badge-text { fill: #fff; font: 700 9px "Liberation Serif", serif; }
.dim { fill: #111; stroke: none; font: 12px "Liberation Serif", serif; }
.a1 { fill: #111; font: 13px "Liberation Serif", serif; }

/* Drawing area */
.workspace { display: flex; flex: 1; min-height: 0; }
.palette {
  flex: none;
  width: 88px;
  padding: 56px 2px 0;
  overflow: hidden;
  border-right: 1px solid #a8a8a8;
  background: radial-gradient(circle, #b0b0b0 1px, transparent 1px) 3px 49px / 4px 3px repeat-x #f2f2f2;
}
.pair { display: grid; grid-template-columns: 42px 42px; }
.palette hr { height: 1px; margin: 3px 1px 4px; border: 0; background: #888; }

.stage {
  position: relative;
  flex: 1;
  min-width: 0;
  border-top: 2px solid #696969;
  border-left: 2px solid #696969;
  background: #cdcdc8;
}
.scene { position: absolute; width: 100%; height: 100%; overflow: hidden; }

.tooltip {
  position: absolute;
  top: -2px;
  left: 752px;
  display: flex;
  gap: 9px;
  padding: 2px 4px 4px 8px;
  border: 1px solid #707070;
  background: #fff;
  box-shadow: 2px 2px 2px #777;
  color: #4d4d4d;
}
.tooltip svg { margin-top: 2px; }
.tip-body strong { display: block; padding-bottom: 4px; border-bottom: 1px solid #555; line-height: 18px; }
.tip-body p { margin: 0; font-size: 14px; line-height: 21px; white-space: nowrap; }
.pointer { position: absolute; top: 31px; left: 780px; pointer-events: none; }

.watermark {
  position: absolute;
  right: 57px;
  bottom: 28px;
  display: flex;
  gap: 9px;
  width: 289px;
  height: 146px;
  padding: 25px 0 0 7px;
  border: 1px solid #5a6485;
  background: #232f56;
  color: #dedede;
}
.brand { display: flex; flex-direction: column; }
.brand-name { font-size: 44px; font-weight: 700; line-height: 56px; white-space: nowrap; }
.brand-url { font-family: Inter, sans-serif; font-size: 36px; font-weight: 300; line-height: 34px; }
```
